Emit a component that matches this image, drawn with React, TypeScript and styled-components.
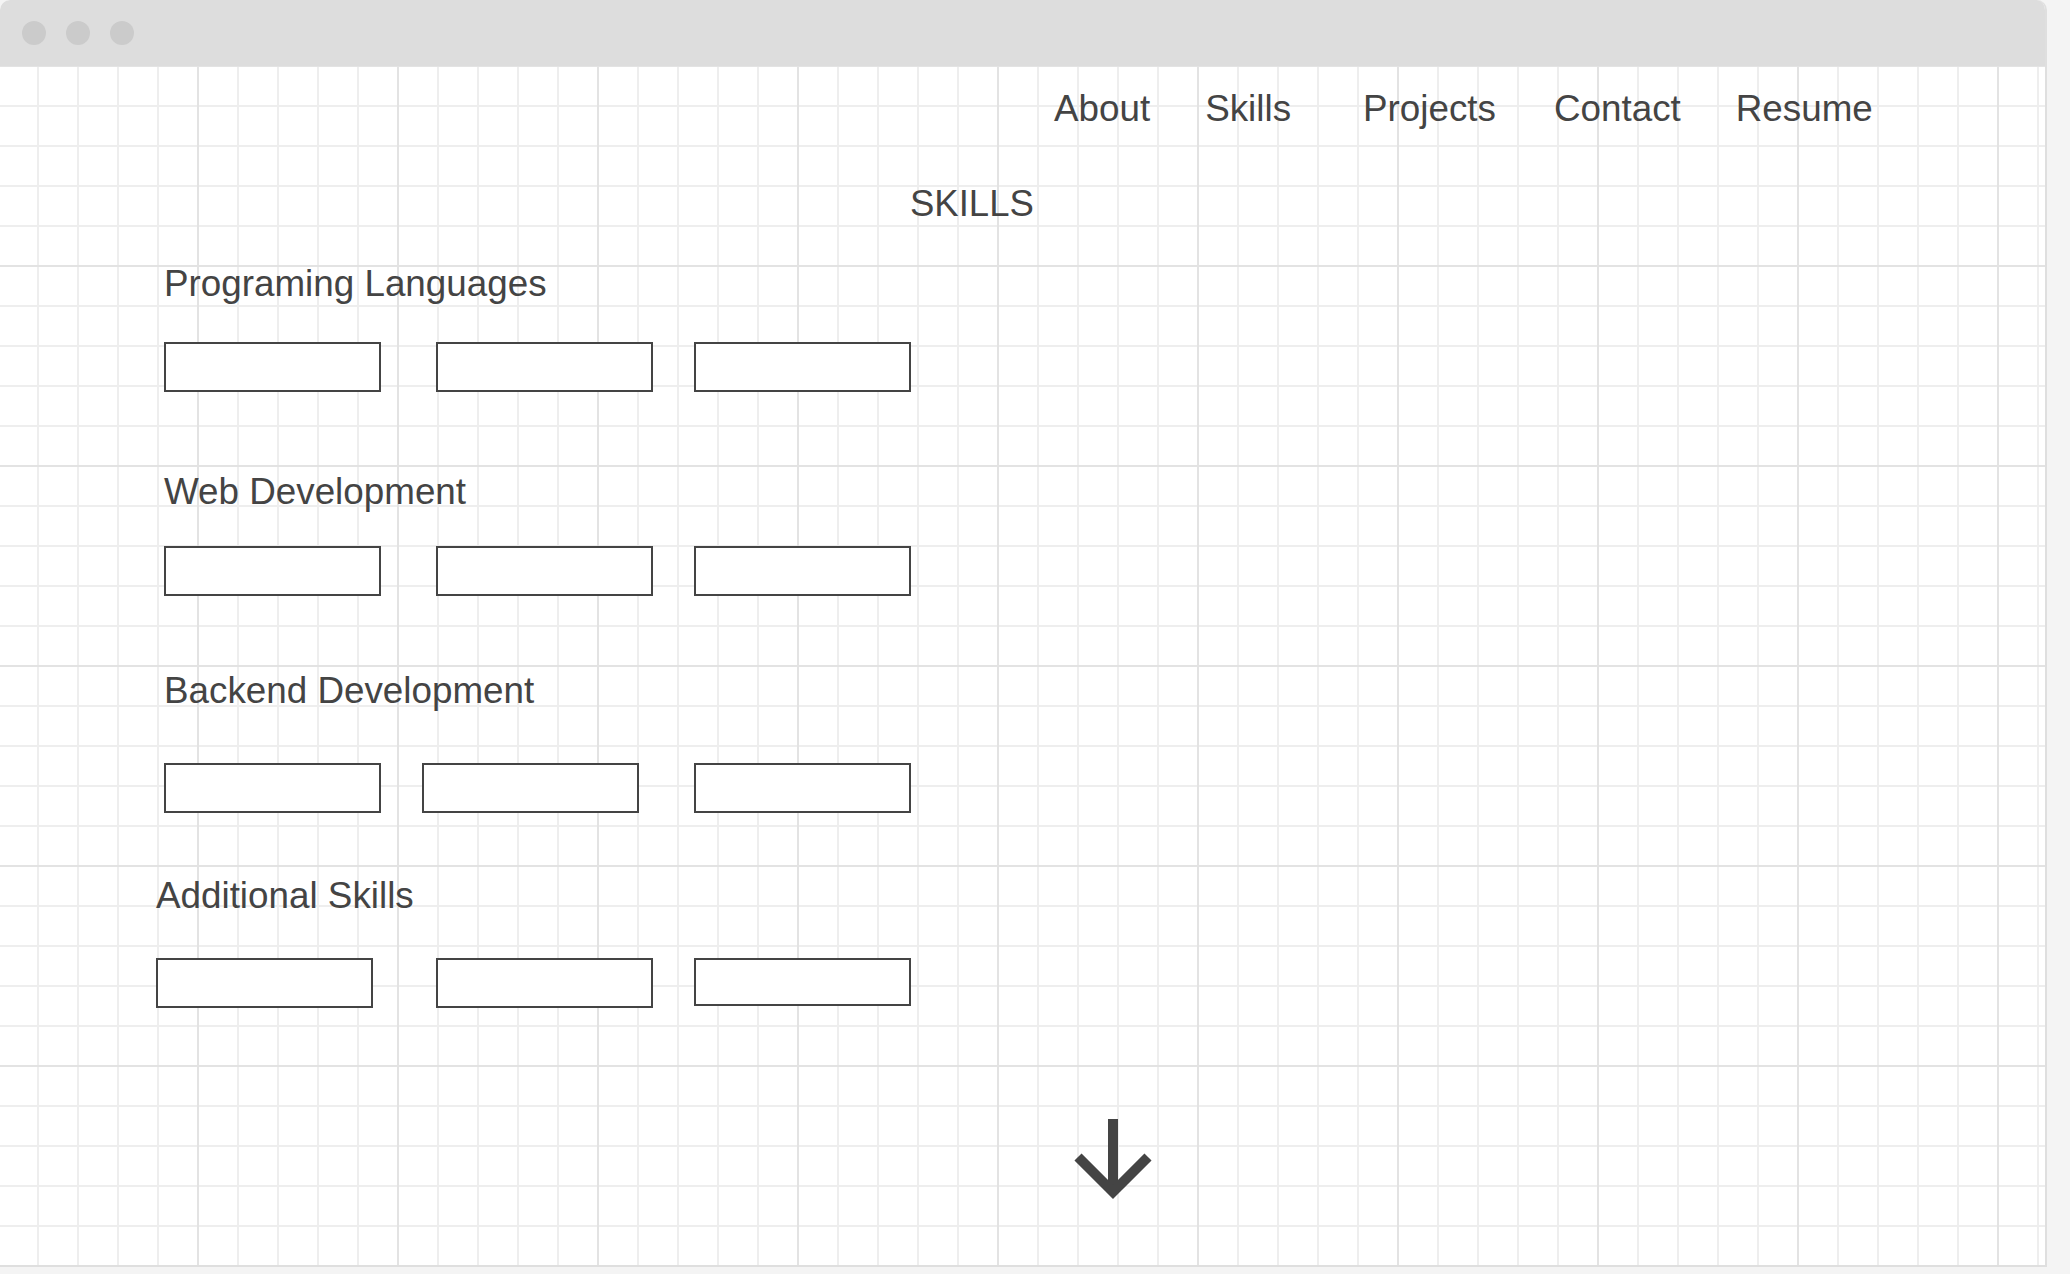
import React from "react";
import styled, { createGlobalStyle } from "styled-components";

const GlobalStyle = createGlobalStyle`
  html, body {
    margin: 0;
    padding: 0;
    background: #f4f4f4;
  }
  body {
    font-family: "Liberation Sans", Arial, sans-serif;
    color: #444444;
  }
`;

const Window = styled.div`
  width: 2047px;
  height: 1267px;
  box-sizing: border-box;
  border-right: 2px solid #dfdfdf;
  border-bottom: 2px solid #dfdfdf;
  border-radius: 10px 10px 0 0;
  overflow: hidden;
  display: flex;
  flex-direction: column;
  background: #ffffff;
`;

const TitleBar = styled.div`
  height: 66px;
  flex: none;
  background: #dddddd;
  display: flex;
  align-items: center;
  gap: 20px;
  padding-left: 22px;
`;

const Dot = styled.span`
  width: 24px;
  height: 24px;
  border-radius: 50%;
  background: #cbcbcb;
`;

const Canvas = styled.main`
  flex: 1;
  display: flex;
  flex-direction: column;
  padding-top: 25px;
  background-color: #ffffff;
  background-image:
    linear-gradient(to right, #e3e3e3 2px, transparent 2px),
    linear-gradient(to bottom, #e3e3e3 2px, transparent 2px),
    linear-gradient(to right, #eeeeee 2px, transparent 2px),
    linear-gradient(to bottom, #eeeeee 2px, transparent 2px);
  background-size: 200px 200px, 200px 200px, 40px 40px, 40px 40px;
  background-position: -3px -1px;
`;

const Nav = styled.nav`
  display: flex;
  padding-left: 1054px;
`;

const NavLink = styled.a<{ $offset: number }>`
  font-size: 36.8px;
  line-height: 36px;
  color: #444444;
  text-decoration: none;
  margin-left: ${(p) => p.$offset}px;
  white-space: nowrap;
`;

const PageTitle = styled.h1`
  margin: 61px 0 0 0;
  padding-left: 910px;
  font-size: 36.5px;
  line-height: 32px;
  font-weight: 400;
  color: #444444;
`;

const Section = styled.section<{ $top: number; $left: number }>`
  margin-top: ${(p) => p.$top}px;
  padding-left: ${(p) => p.$left}px;
  display: flex;
  flex-direction: column;
`;

const SectionTitle = styled.h2<{ $gap: number }>`
  margin: 0 0 ${(p) => p.$gap}px 0;
  font-size: 36.8px;
  line-height: 34px;
  font-weight: 400;
  color: #444444;
  white-space: nowrap;
`;

const BoxRow = styled.div`
  display: flex;
  align-items: flex-start;
`;

const SkillBox = styled.div<{ $offset: number; $short?: boolean }>`
  box-sizing: border-box;
  width: 217px;
  height: ${(p) => (p.$short ? 48 : 50)}px;
  margin-left: ${(p) => p.$offset}px;
  border: 2px solid #444444;
  background: #ffffff;
`;

const ArrowWrap = styled.div`
  margin-top: 102px;
  padding-left: 1068px;
  display: flex;
`;

type SectionData = {
  title: string;
  top: number;
  left: number;
  gap: number;
  boxes: { offset: number; short?: boolean }[];
};

const sections: SectionData[] = [
  {
    title: "Programing Languages",
    top: 47,
    left: 164,
    gap: 41,
    boxes: [{ offset: 0 }, { offset: 55 }, { offset: 41 }],
  },
  {
    title: "Web Development",
    top: 83,
    left: 164,
    gap: 37,
    boxes: [{ offset: 0 }, { offset: 55 }, { offset: 41 }],
  },
  {
    title: "Backend Development",
    top: 78,
    left: 164,
    gap: 55,
    boxes: [{ offset: 0 }, { offset: 41 }, { offset: 55 }],
  },
  {
    title: "Additional Skills",
    top: 66,
    left: 156,
    gap: 45,
    boxes: [{ offset: 0 }, { offset: 63 }, { offset: 41, short: true }],
  },
];

const navItems = [
  { label: "About", offset: 0 },
  { label: "Skills", offset: 55 },
  { label: "Projects", offset: 72 },
  { label: "Contact", offset: 58 },
  { label: "Resume", offset: 55 },
];

const DownArrow = () => (
  <svg width="90" height="92" viewBox="0 0 90 92" aria-hidden="true">
    <line x1="45" y1="9" x2="45" y2="80" stroke="#444444" strokeWidth="10" />
    <polyline
      points="10,47 45,82 80,47"
      fill="none"
      stroke="#444444"
      strokeWidth="10"
      strokeLinejoin="miter"
    />
  </svg>
);

export default function App() {
  return (
    <>
      <GlobalStyle />
      <Window>
        <TitleBar>
          <Dot />
          <Dot />
          <Dot />
        </TitleBar>
        <Canvas>
          <Nav>
            {navItems.map((n) => (
              <NavLink key={n.label} href="#" $offset={n.offset}>
                {n.label}
              </NavLink>
            ))}
          </Nav>
          <PageTitle>SKILLS</PageTitle>
          {sections.map((s) => (
            <Section key={s.title} $top={s.top} $left={s.left}>
              <SectionTitle $gap={s.gap}>{s.title}</SectionTitle>
              <BoxRow>
                {s.boxes.map((b, i) => (
                  <SkillBox key={i} $offset={b.offset} $short={b.short} />
                ))}
              </BoxRow>
            </Section>
          ))}
          <ArrowWrap>
            <DownArrow />
          </ArrowWrap>
        </Canvas>
      </Window>
    </>
  );
}
